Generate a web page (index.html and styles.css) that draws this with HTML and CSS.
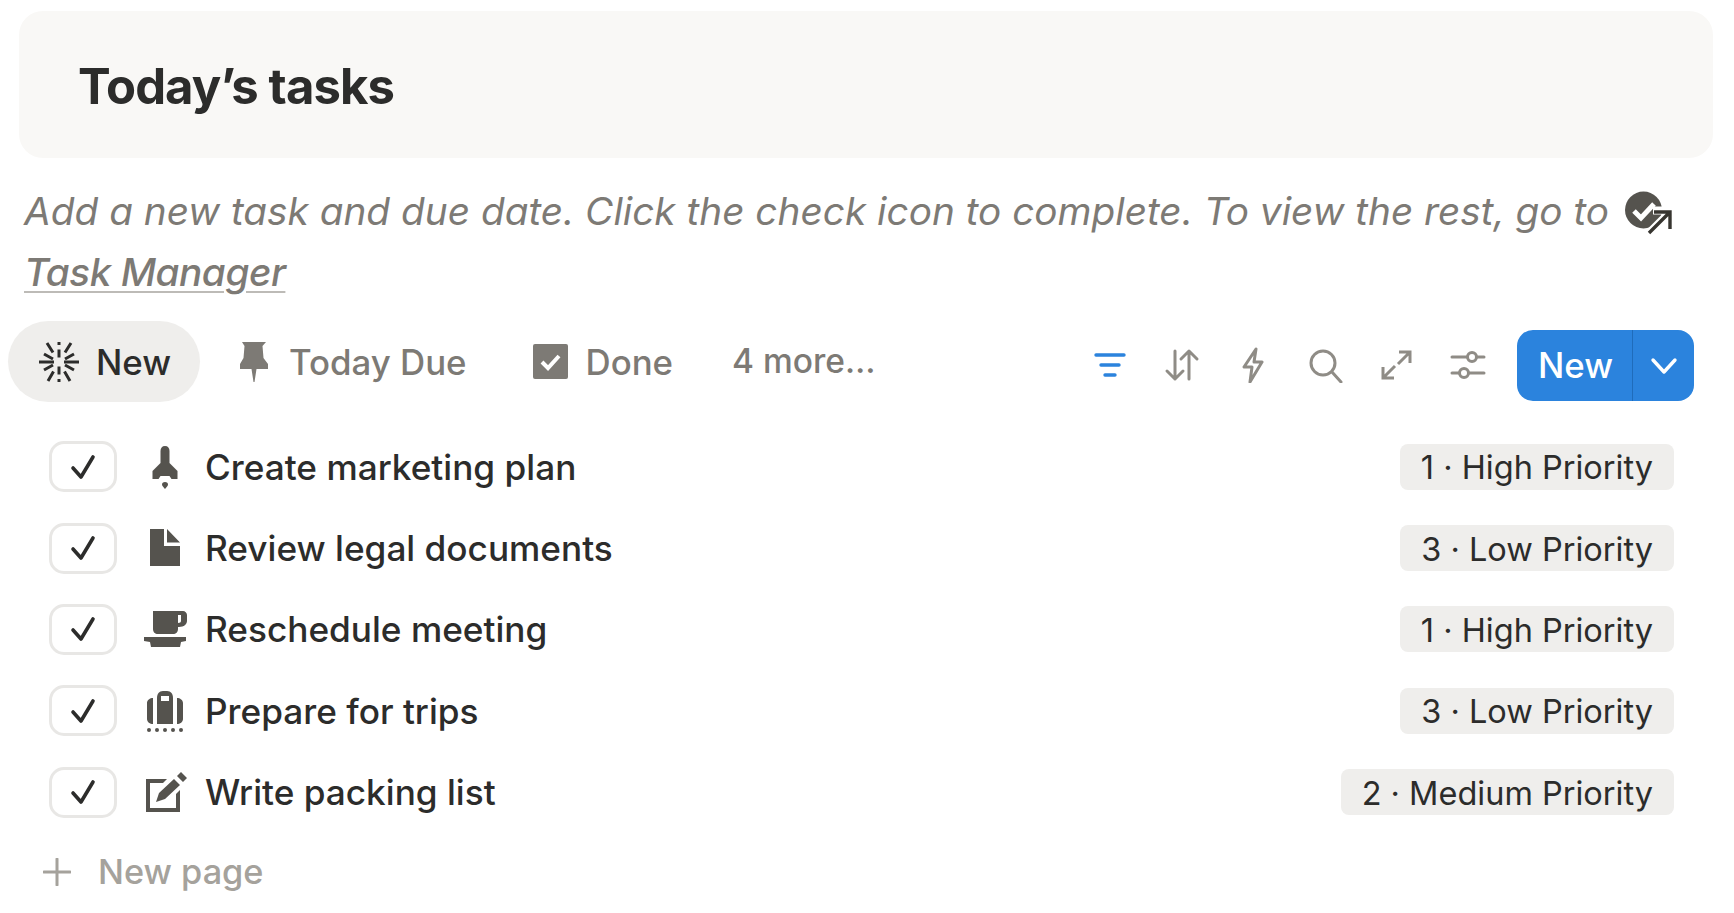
FILE: index.html
```html
<!DOCTYPE html>
<html lang="en">
<head>
<meta charset="utf-8">
<title>Today's tasks</title>
<link rel="stylesheet" href="styles.css">
</head>
<body>
<header class="heading"><h1>Today’s tasks</h1></header>
<p class="desc">Add a new task and due date. Click the check icon to complete. To view the rest, go to <svg class="link-icon" viewBox="0 0 47 44" width="47" height="44"><circle cx="18.500" cy="19" r="18.500" fill="#55534e"/><path d="M9 20l7 7 13-14" fill="none" stroke="#fff" stroke-width="5"/><path d="M28 19.500h19v20M46 20L23 43" fill="none" stroke="#fff" stroke-width="8"/><path d="M29 21h16v17M45 21L24 42" fill="none" stroke="#373530" stroke-width="3.400"/></svg> <a class="link" href="#">Task Manager</a></p>

<div class="toolbar">
  <div class="tab tab-active">
    <svg class="ico-spark" viewBox="0 0 40 40" width="40" height="40"><g fill="none" stroke="#2c2c2b" stroke-width="3"><path d="M20 0v3M20 7.500v8M20 24.500v8M20 37v3M0 20h15M25 20h15M8 1l6 9.500M32 1l-6 9.500M9 39l5.500-9.500M31 39l-5.500-9.500M5 12l9 5M35 12l-9 5M5 28l9-5M35 28l-9-5"/></g></svg>
    <span>New</span>
  </div>
  <div class="tab tab-pin">
    <svg viewBox="0 0 28 40" width="28" height="40"><path d="M2 0h24l-3.500 4 1 12L28 22v5H16.500L14.500 40h-1L11.500 27H0v-5l3.500-6 1-12z" fill="#7d7a75"/></svg>
    <span>Today Due</span>
  </div>
  <div class="tab tab-done">
    <svg viewBox="0 0 35 35" width="35" height="35"><rect width="35" height="35" rx="2" fill="#7d7a75"/><path d="M9 18l6 6 11-12" fill="none" stroke="#fff" stroke-width="4"/></svg>
    <span>Done</span>
  </div>
  <div class="tab tab-more">4 more…</div>

  <div class="tools">
    <svg class="tool" viewBox="0 0 36 36" width="36" height="36"><path d="M4 8h28M9 18h18M13 28h10" fill="none" stroke="#2b83dd" stroke-width="3.400" stroke-linecap="round"/></svg>
    <svg class="tool" viewBox="0 0 36 36" width="36" height="36"><path d="M11 4v28M3 24l8 8 8-8M25 32V4M17 12l8-8 8 8" fill="none" stroke="#8f8c86" stroke-width="3" stroke-linecap="round" stroke-linejoin="round"/></svg>
    <svg class="tool" viewBox="0 0 36 36" width="36" height="36"><path d="M21 2L9 20h8l-2 15 12-20h-8z" fill="none" stroke="#8f8c86" stroke-width="3" stroke-linejoin="round"/></svg>
    <svg class="tool" viewBox="0 0 36 36" width="36" height="36"><circle cx="16" cy="16" r="12" fill="none" stroke="#8f8c86" stroke-width="3"/><path d="M25 25l9 10" stroke="#8f8c86" stroke-width="3" stroke-linecap="round"/></svg>
    <svg class="tool" viewBox="0 0 36 36" width="36" height="36"><path d="M21 5h11v11M32 5L20 17M5 20v11h11M5 31l12-12" fill="none" stroke="#8f8c86" stroke-width="3"/></svg>
    <svg class="tool" viewBox="0 0 36 36" width="36" height="36"><g fill="none" stroke="#8f8c86" stroke-width="3"><path d="M2 10h15M27 10h7M2 26h7M19 26h15" stroke-linecap="round"/><circle cx="22" cy="10" r="4.500"/><circle cx="14" cy="26" r="4.500"/></g></svg>
    <div class="new-btn">
      <span class="new-label">New</span>
      <span class="new-caret"><svg viewBox="0 0 28 18" width="28" height="18"><path d="M3 3l11 12L25 3" fill="none" stroke="#fff" stroke-width="3.400" stroke-linecap="round" stroke-linejoin="round"/></svg></span>
    </div>
  </div>
</div>

<ul class="rows">
  <li class="row">
    <span class="check"><svg viewBox="0 0 26 26" width="26" height="26"><path d="M3 14l8 9L23 3" fill="none" stroke="#2c2c2b" stroke-width="3.600" stroke-linecap="round" stroke-linejoin="round"/></svg></span>
    <svg class="row-ico" viewBox="0 0 44 44" width="44" height="44"><path d="M22 1c3 0 4.500 2 4.500 5v12l8 8v8h-6l-2-3h-9l-2 3h-6v-8l8-8V6c0-3 1.500-5 4.500-5zM22 37c2 0 3 1 3 2.500 0 1.500-2 3-3 4.500-1-1.500-3-3-3-4.500 0-1.500 1-2.500 3-2.500z" fill="#55534e"/></svg>
    <span class="title">Create marketing plan</span>
    <span class="tag">1 · High Priority</span>
  </li>
  <li class="row">
    <span class="check"><svg viewBox="0 0 26 26" width="26" height="26"><path d="M3 14l8 9L23 3" fill="none" stroke="#2c2c2b" stroke-width="3.600" stroke-linecap="round" stroke-linejoin="round"/></svg></span>
    <svg class="row-ico" viewBox="0 0 44 44" width="44" height="44"><path d="M7 3h14v17h16v20H7zM24 3l13 13.500H24z" fill="#55534e"/></svg>
    <span class="title">Review legal documents</span>
    <span class="tag">3 · Low Priority</span>
  </li>
  <li class="row">
    <span class="check"><svg viewBox="0 0 26 26" width="26" height="26"><path d="M3 14l8 9L23 3" fill="none" stroke="#2c2c2b" stroke-width="3.600" stroke-linecap="round" stroke-linejoin="round"/></svg></span>
    <svg class="row-ico" viewBox="0 0 44 44" width="44" height="44"><path fill-rule="evenodd" d="M10 4h30c2 0 4 2 4 4v6c0 3-3 6-8 6h-1v2c0 3-2 5-5 5H15c-3 0-5-2-5-5zM35 8v8c2 0 3-1 3-2V8zM1 30h42v4l-5 1-1 5H8l-1-5-6-1z" fill="#55534e"/></svg>
    <span class="title">Reschedule meeting</span>
    <span class="tag">1 · High Priority</span>
  </li>
  <li class="row">
    <span class="check"><svg viewBox="0 0 26 26" width="26" height="26"><path d="M3 14l8 9L23 3" fill="none" stroke="#2c2c2b" stroke-width="3.600" stroke-linecap="round" stroke-linejoin="round"/></svg></span>
    <svg class="row-ico" viewBox="0 0 44 44" width="44" height="44"><g fill="#55534e"><path fill-rule="evenodd" d="M14 9c0-4 2-7 6-7h4c4 0 6 3 6 7v26H14zM18 7v5h8V7z"/><path d="M10 9v26c-3 0-6-2-6-5V14c0-3 3-5 6-5zM34 9c3 0 6 2 6 5v16c0 3-3 5-6 5z"/><circle cx="6" cy="41" r="2"/><circle cx="14" cy="41" r="2"/><circle cx="22" cy="41" r="2"/><circle cx="30" cy="41" r="2"/><circle cx="38" cy="41" r="2"/></g></svg>
    <span class="title">Prepare for trips</span>
    <span class="tag">3 · Low Priority</span>
  </li>
  <li class="row">
    <span class="check"><svg viewBox="0 0 26 26" width="26" height="26"><path d="M3 14l8 9L23 3" fill="none" stroke="#2c2c2b" stroke-width="3.600" stroke-linecap="round" stroke-linejoin="round"/></svg></span>
    <svg class="row-ico" viewBox="0 0 44 44" width="44" height="44"><g fill="#55534e"><path d="M3 9h21l-4 4H7v25h26V24l4-4v22H3z"/><path d="M31 9l6 6-15 14-9 3 3-9zM34 6l4-4 6 6-4 4z"/></g></svg>
    <span class="title">Write packing list</span>
    <span class="tag">2 · Medium Priority</span>
  </li>
</ul>

<div class="new-page">
  <svg viewBox="0 0 28 28" width="28" height="28"><path d="M14 1v26M1 14h26" stroke="#a5a29c" stroke-width="3" stroke-linecap="round"/></svg>
  <span>New page</span>
</div>
</body>
</html>
```
FILE: styles.css
```css
* { box-sizing: border-box; }
html, body { margin: 0; padding: 0; background: #fff; }
body {
  width: 1734px;
  height: 913px;
  overflow: hidden;
  font-family: Inter, "Noto Sans", sans-serif;
  color: #2c2c2b;
}
.heading {
  margin: 11px 21px 0 19px;
  height: 147px;
  padding-left: 59px;
  display: flex;
  align-items: center;
  background: #f9f8f6;
  border-radius: 24px;
}
h1 {
  margin: 3px 0 0;
  font-size: 49px;
  font-weight: 700;
  letter-spacing: -0.9px;
  line-height: 1;
}
.desc {
  margin: 22px 0 0 24px;
  width: 1700px;
  font-size: 38.750px;
  line-height: 61px;
  font-style: italic;
  color: #7d7a75;
}
.link-icon { vertical-align: -10px; margin-left: 5px; }
.link {
  color: #7d7a75;
  font-weight: 500;
  letter-spacing: -0.5px;
  text-decoration: underline;
  text-decoration-color: #bdbbb7;
  text-decoration-thickness: 2px;
  text-underline-offset: 5px;
}
.toolbar {
  margin: 19px 0 0 8px;
  height: 81px;
  display: flex;
  align-items: center;
  font-size: 34.800px;
  font-weight: 500;
  color: #7d7a75;
}
.tab { display: flex; align-items: center; white-space: nowrap; }
.tab-active {
  width: 192px;
  height: 81px;
  padding-left: 31px;
  gap: 17px;
  border-radius: 41px;
  background: #efeeec;
  color: #2c2c2b;
}
.tab-pin { margin-left: 40px; gap: 21px; }
.tab-done { margin-left: 66px; gap: 18px; }
.tab-more { margin-left: 59px; margin-top: -1px; font-size: 33.500px; }
.tools {
  margin-top: 8px;
  margin-left: auto;
  margin-right: 40px;
  display: flex;
  align-items: center;
  gap: 35.500px;
}
.tool { margin-top: -2px; }
.new-btn {
  margin-left: -4px;
  width: 177px;
  height: 71px;
  display: flex;
  border-radius: 16px;
  background: #2b83dd;
  color: #fff;
  overflow: hidden;
}
.new-label {
  width: 116px;
  padding-left: 2px;
  padding-bottom: 2px;
  display: flex;
  align-items: center;
  justify-content: center;
  border-right: 1px solid #1f6cbb;
}
.new-caret {
  flex: 1;
  display: flex;
  align-items: center;
  justify-content: center;
}
.rows {
  list-style: none;
  margin: 24px 0 0;
  padding: 0 60px 0 49px;
}
.row {
  height: 81.4px;
  display: flex;
  align-items: center;
  font-size: 35.200px;
  font-weight: 500;
}
.check {
  width: 68px;
  height: 51px;
  display: flex;
  align-items: center;
  justify-content: center;
  border: 3px solid #e8e7e5;
  border-radius: 15px;
  flex: none;
}
.row-ico { margin-left: 26px; flex: none; }
.title { margin-left: 18px; }
.tag {
  margin-left: auto;
  height: 46px;
  padding: 2px 21px 0;
  display: flex;
  align-items: center;
  border-radius: 8px;
  background: #efeeec;
  font-size: 32.500px;
  font-weight: 400;
  white-space: nowrap;
}
.new-page {
  margin: 0 0 0 43px;
  height: 78px;
  display: flex;
  align-items: center;
  gap: 27px;
  font-size: 34.300px;
  font-weight: 500;
  color: #a5a29c;
}
```
